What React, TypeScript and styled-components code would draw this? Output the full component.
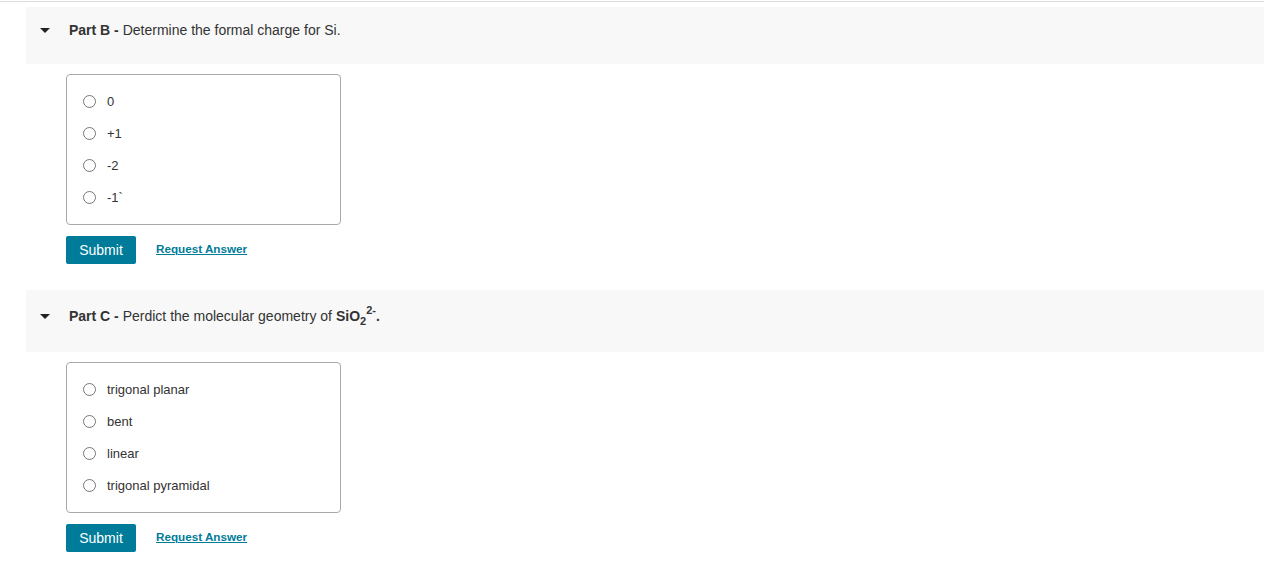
import React from "react";
import styled, { createGlobalStyle } from "styled-components";

const GlobalStyle = createGlobalStyle`
  html, body { margin: 0; padding: 0; background: #fff; }
  body { font-family: "Liberation Sans", Arial, sans-serif; color: #333; }
`;

const TopRule = styled.div`
  margin-top: 1px;
  height: 1px;
  background: #dddddd;
`;

const Parts = styled.div`
  padding-left: 26px;
  padding-top: 5px;
  display: flex;
  flex-direction: column;
`;

const Part = styled.section`
  display: flex;
  flex-direction: column;
  & + & { margin-top: 26px; }
`;

const Header = styled.div`
  background: #f8f8f8;
  display: flex;
  align-items: center;
  padding: 13px 0 24px 14px;
  font-size: 14px;
  line-height: 20px;
  color: #333;
`;

const Caret = styled.span`
  width: 0;
  height: 0;
  border-left: 5px solid transparent;
  border-right: 5px solid transparent;
  border-top: 5px solid #222;
  margin-right: 19px;
  margin-top: 1px;
`;

const Title = styled.div`
  sub, sup { font-size: 11px; line-height: 14px; }
  sup { vertical-align: 7px; }
  sub { vertical-align: -4px; }
`;

const Body = styled.div`
  padding-left: 40px;
  padding-top: 10px;
  display: flex;
  flex-direction: column;
`;

const Choices = styled.div`
  box-sizing: border-box;
  width: 275px;
  border: 1px solid #aaaaaa;
  border-radius: 4px;
  padding: 10px 0 11px 16px;
  display: flex;
  flex-direction: column;
`;

const Choice = styled.label`
  height: 32px;
  display: flex;
  align-items: center;
  font-size: 13px;
  color: #333;
`;

const Radio = styled.span`
  box-sizing: border-box;
  width: 13px;
  height: 13px;
  border: 1px solid #767676;
  border-radius: 50%;
  background: #fff;
  margin-right: 11px;
`;

const Actions = styled.div`
  margin-top: 11px;
  display: flex;
  align-items: center;
  gap: 20px;
`;

const SubmitButton = styled.button`
  width: 70px;
  height: 28px;
  border: none;
  border-radius: 2px;
  background: #007c9a;
  color: #fff;
  font-family: "Liberation Sans", Arial, sans-serif;
  font-size: 14px;
  padding: 0;
`;

const RequestLink = styled.a`
  color: #007c9a;
  font-weight: bold;
  font-size: 11.7px;
  text-decoration: underline;
  margin-top: -4px;
`;

type PartProps = { title: React.ReactNode; label: string; options: string[] };

function QuestionPart({ title, label, options }: PartProps) {
  return (
    <Part>
      <Header>
        <Caret />
        <Title>
          <b>{label} - </b>
          {title}
        </Title>
      </Header>
      <Body>
        <Choices>
          {options.map((o) => (
            <Choice key={o}>
              <Radio />
              {o}
            </Choice>
          ))}
        </Choices>
        <Actions>
          <SubmitButton>Submit</SubmitButton>
          <RequestLink href="#">Request Answer</RequestLink>
        </Actions>
      </Body>
    </Part>
  );
}

export default function App() {
  return (
    <>
      <GlobalStyle />
      <TopRule />
      <Parts>
        <QuestionPart
          label="Part B"
          title="Determine the formal charge for Si."
          options={["0", "+1", "-2", "-1`"]}
        />
        <QuestionPart
          label="Part C"
          title={
            <>
              Perdict the molecular geometry of{" "}
              <b>
                SiO<sub>2</sub>
                <sup>2-</sup>.
              </b>
            </>
          }
          options={["trigonal planar", "bent", "linear", "trigonal pyramidal"]}
        />
      </Parts>
    </>
  );
}
